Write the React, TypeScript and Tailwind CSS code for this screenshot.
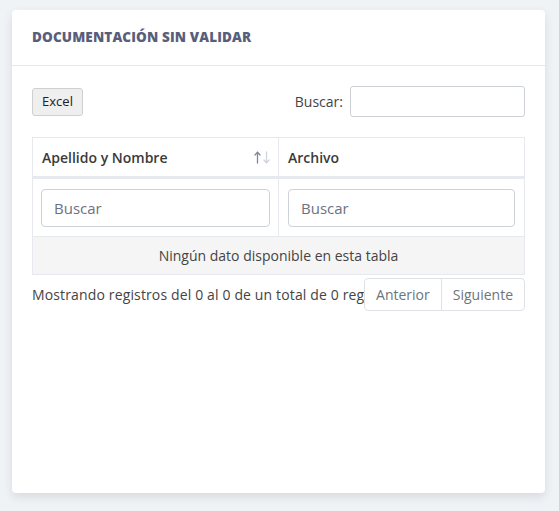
import React from 'react';

const font = { fontFamily: '"Open Sans", "Noto Sans", sans-serif' };

function SortArrows() {
  return (
    <svg width="16" height="13" viewBox="0 0 16 13" fill="none" strokeWidth="1.3" strokeLinecap="round">
      <g stroke="#7f889c">
        <path d="M3.5 12V1.5" />
        <path d="M1 4L3.5 1.3L6 4" />
      </g>
      <g stroke="#cfd4dc">
        <path d="M12.5 1V11.5" />
        <path d="M10 9L12.5 11.7L15 9" />
      </g>
    </svg>
  );
}

export default function App() {
  return (
    <div className="min-h-[511px] w-full bg-[#f0f3f6] pl-3 pr-[14px] pt-[10px] pb-[18px]" style={font}>
      <div className="flex h-[483px] flex-col rounded-[4px] bg-white shadow-[0_4px_10px_rgba(30,40,60,0.12)]">
        {/* Header */}
        <div className="flex h-[56px] items-center border-b border-[#e4e7eb] px-5">
          <h2 className="text-[13.5px] font-extrabold tracking-[0.01em] text-[#575e7c]">DOCUMENTACIÓN SIN VALIDAR</h2>
        </div>

        {/* Body */}
        <div className="flex flex-col px-5 pt-[20px]">
          <div className="flex items-center justify-between">
            <button className="h-[28px] w-[51px] rounded-[3px] border border-[#d0d0d0] bg-[#efefef] text-[13px] font-medium text-[#222]">
              Excel
            </button>
            <div className="flex items-center gap-[7px]">
              <span className="text-[14px] text-[#444]">Buscar:</span>
              <input className="h-[31px] w-[175px] rounded-[3px] border border-[#cdd1d6] bg-white outline-none" />
            </div>
          </div>

          {/* Table */}
          <div className="mt-[20px] border border-[#e6e9ed]">
            <div className="grid grid-cols-[246px_1fr] border-b-[3px] border-[#e6e9ed]">
              <div className="flex h-[38px] items-center justify-between border-r border-[#e6e9ed] pl-[9px] pr-[8px]">
                <span className="text-[14px] font-semibold text-[#3a3a3a]">Apellido y Nombre</span>
                <SortArrows />
              </div>
              <div className="flex h-[38px] items-center pl-[9px]">
                <span className="text-[14px] font-semibold text-[#3a3a3a]">Archivo</span>
              </div>
            </div>
            <div className="grid grid-cols-[246px_1fr] border-b border-[#e6e9ed]">
              <div className="flex h-[57px] items-center border-r border-[#e6e9ed] px-[8px]">
                <input
                  placeholder="Buscar"
                  className="h-[38px] w-full rounded-[4px] border border-[#ced2d9] px-3 text-[15px] text-[#555] outline-none placeholder:text-[#6b7280]"
                />
              </div>
              <div className="flex h-[57px] items-center px-[9px]">
                <input
                  placeholder="Buscar"
                  className="h-[38px] w-full rounded-[4px] border border-[#ced2d9] px-3 text-[15px] text-[#555] outline-none placeholder:text-[#6b7280]"
                />
              </div>
            </div>
            <div className="flex h-[37px] items-center justify-center bg-[#f5f5f5] text-[14px] text-[#444]">
              Ningún dato disponible en esta tabla
            </div>
          </div>

          {/* Footer */}
          <div className="mt-[3px] flex h-[33px] items-center">
            <span className="min-w-0 flex-1 overflow-hidden whitespace-nowrap text-[14px] tracking-[0.01em] text-[#444]">
              Mostrando registros del 0 al 0 de un total de 0 registros
            </span>
            <div className="flex h-[33px] shrink-0 rounded-[4px] border border-[#dee2e6] bg-white text-[14px] text-[#6c757d]">
              <span className="flex items-center border-r border-[#dee2e6] px-[11px]">Anterior</span>
              <span className="flex items-center px-[11px]">Siguiente</span>
            </div>
          </div>
        </div>
      </div>
    </div>
  );
}
